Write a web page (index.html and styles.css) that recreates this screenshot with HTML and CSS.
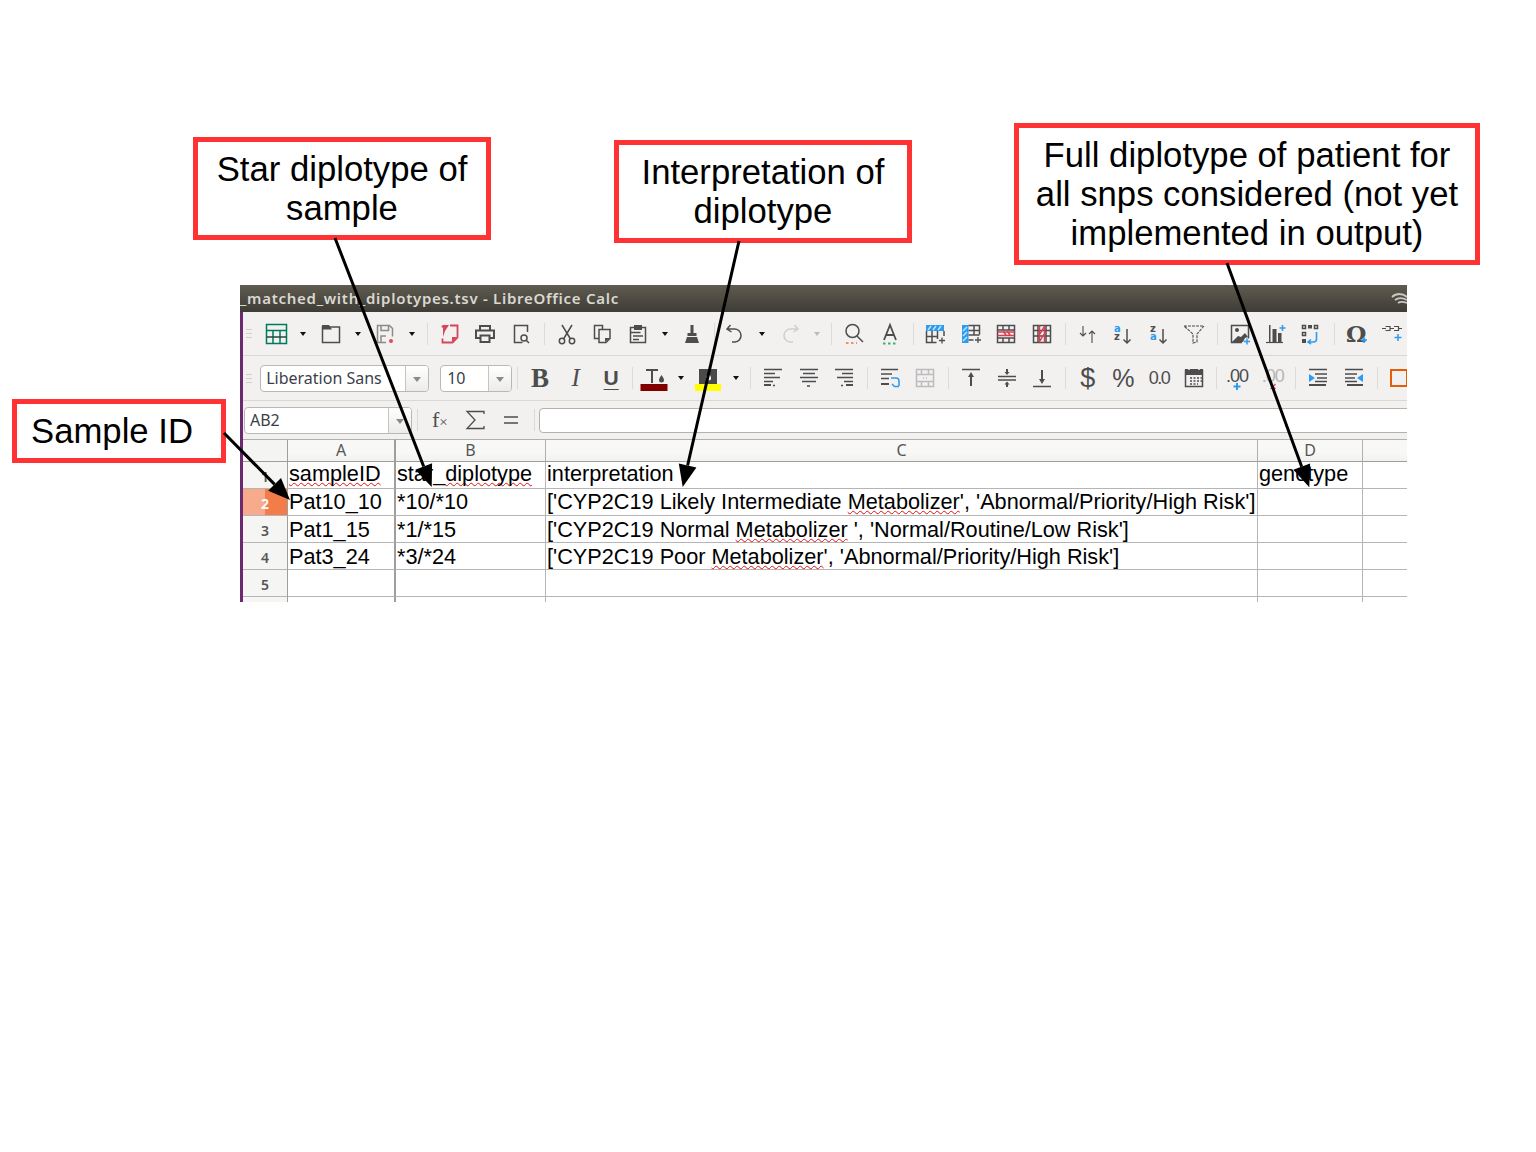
FILE: index.html

```html
<!DOCTYPE html>
<html lang="en">
<head>
  <meta charset="UTF-8" />
  <title>Matched diplotypes output</title>
  <link rel="stylesheet" href="styles.css">
</head>
<body>
<div class="canvas">

  <div class="callout star">Star diplotype of<br>sample</div>
  <div class="callout interp">Interpretation of<br>diplotype</div>
  <div class="callout full">Full diplotype of patient for<br>all snps considered (not yet<br>implemented in output)</div>
  <div class="callout sid">Sample ID</div>

  <div class="window">
    <div class="titlebar">
      <span>_matched_with_diplotypes.tsv - LibreOffice Calc</span>
      <svg class="wifi" width="16" height="14" viewBox="0 0 16 14"><path d="M1 6c4-4 11-4 15 0M4 9c3-2.5 8-2.5 12 0M7 12c2-1.5 5-1.5 9 0" fill="none" stroke="#c9c7c0" stroke-width="1.8"/></svg>
    </div>

    <div class="app">
      <!-- standard toolbar -->
      <div class="tb row1">
        <i class="grip"></i>
        <b class="ic"><svg viewBox="0 0 24 24"><rect x="2.5" y="2.5" width="20" height="19" stroke="#007a5c"/><path d="M2.5 8.5h20M9 8.5v13M16 8.5v13" stroke="#007a5c"/><path d="M2.5 15h20" stroke="#24493e"/></svg></b>
        <b class="dd"></b>
        <b class="ic"><svg viewBox="0 0 24 24"><rect x="3.5" y="5" width="17" height="15.5"/><path class="f" d="M3 3h7l3 4.500H3z"/></svg></b>
        <b class="dd"></b>
        <b class="ic"><svg viewBox="0 0 24 24"><path stroke="#8b8b8b" d="M13 20.500H4.500v-17h12l3 3v8M8 3.500v5h7.500v-5M8 20v-6h5"/><circle cx="18" cy="19" r="2" fill="#e5465e" stroke="none"/></svg></b>
        <b class="dd"></b>
        <i class="sep"></i>
        <b class="ic"><svg viewBox="0 0 24 24"><path stroke="#d6455a" stroke-width="1.8" d="M12 3.500h7.500v12l-5 5h-10v-4M4.500 3.500v2"/><path fill="#d6455a" stroke="none" d="M5 3h6l-4 6-2 6zM14 20v-5h5z"/></svg></b>
        <b class="ic"><svg viewBox="0 0 24 24"><path stroke-width="2" d="M7 8V4h10v4M7 16H3V8.500h18V16h-4"/><path stroke-width="2" d="M7.500 13.500h9V20h-9z"/></svg></b>
        <b class="ic"><svg viewBox="0 0 24 24"><path d="M18.500 10V3.500h-13v17h8"/><circle cx="15" cy="16" r="3"/><path d="M17 18l3 3"/></svg></b>
        <i class="sep"></i>
        <b class="ic"><svg viewBox="0 0 24 24"><circle cx="7" cy="19" r="2.7"/><circle cx="17" cy="19" r="2.7"/><path d="M8.500 17L17 3M15.500 17L7 3"/></svg></b>
        <b class="ic"><svg viewBox="0 0 24 24"><path d="M9 16.500H4.500v-13h8v4"/><path d="M9 7.500h11v9l-4 4H9z"/><path class="f" d="M15 20v-4h5z"/></svg></b>
        <b class="ic"><svg viewBox="0 0 24 24"><rect x="4.5" y="5.5" width="15" height="15"/><path class="f" d="M8 3h8v5H8z"/><path d="M4.500 10.500h10M7 14h10M7 17.500h6"/></svg></b>
        <b class="dd"></b>
        <b class="ic"><svg viewBox="0 0 24 24"><path class="f" d="M10.500 3h3v8h3v3h-9v-3h3zM7 15h10l2 6H5z"/></svg></b>
        <i class="sep n"></i>
        <b class="ic"><svg viewBox="0 0 24 24"><path d="M7.500 3L4 7l4.500 3M4 7h7a6.500 6.500 0 0 1 1 13H9"/></svg></b>
        <b class="dd"></b>
        <b class="ic"><svg viewBox="0 0 24 24"><path stroke="#cfcfcf" d="M16.500 3L20 7l-4.500 3M20 7h-7a6.500 6.500 0 0 0-1 13h3"/></svg></b>
        <b class="dd off"></b>
        <i class="sep"></i>
        <b class="ic"><svg viewBox="0 0 24 24"><circle cx="10.5" cy="9" r="6.5"/><path d="M15 14l6 6"/><path stroke="#f58a6c" stroke-width="2" stroke-dasharray="2.5 2.5" d="M4 21h11"/></svg></b>
        <b class="ic"><svg viewBox="0 0 24 24"><path stroke-width="1.8" d="M6 18l6-15 6 15M8 13h8"/><path stroke="#3cb371" stroke-width="2" stroke-dasharray="2.5 2.5" d="M5 21.500h14"/></svg></b>
        <i class="sep"></i>
        <b class="ic"><svg viewBox="0 0 24 24"><rect x="3" y="3" width="18" height="6" fill="#2d9cf0" stroke="none"/><path stroke="#bfe2fb" d="M5 8l3-4M10 8l3-4M15 8l3-4"/><path d="M3.500 9v11.500h10M21 9v5M3.500 14.500h11M9 9v11M14.500 9v8"/><path stroke-width="1.3" d="M19 15.500v6M16 18.500h6"/></svg></b>
        <b class="ic"><svg viewBox="0 0 24 24"><rect x="3" y="3" width="6.5" height="18" fill="#2d9cf0" stroke="none"/><path stroke="#bfe2fb" d="M4 9l4-4M4 14l4-4M4 19l4-4"/><path d="M9.500 3.500h11v9M9.500 8.500h11M9.500 13h11M9.500 18h5M15 3.500V13"/><path stroke-width="1.3" d="M19 15v6M16 18h6"/></svg></b>
        <b class="ic"><svg viewBox="0 0 24 24"><rect x="3.5" y="3.5" width="17" height="17"/><path d="M3.500 8h17M3.500 16h17M9 3.500v4.500M15 3.500v4.500M9 16v4.500M15 16v4.500"/><path stroke="#dc3d50" d="M3.500 13.500h17M3.500 10h17M9 9l3 4M13 9l3 4"/></svg></b>
        <b class="ic"><svg viewBox="0 0 24 24"><rect x="3.5" y="3.5" width="17" height="17"/><path d="M3.500 8.500h17M3.500 14h17M8 3.500v17M16 3.500v17"/><path stroke="#dc3d50" d="M9.500 3.500v17M14.500 3.500v17M14 5L10 12M14 12l-4 7"/></svg></b>
        <i class="sep"></i>
        <b class="ic"><svg viewBox="0 0 24 24"><path stroke-width="1.1" d="M7 4v10M4 11l3 3 3-3M16 21V9M13 12l3-3 3 3"/></svg></b>
        <b class="ic"><svg viewBox="0 0 24 24"><text x="3" y="10" class="az blue">a</text><text x="3" y="18" class="az">z</text><path d="M16 7v14M12.500 17.500l3.500 3.500 3.500-3.500"/></svg></b>
        <b class="ic"><svg viewBox="0 0 24 24"><text x="3" y="10" class="az">z</text><text x="3" y="18" class="az blue">a</text><path d="M16 7v14M12.500 17.500l3.500 3.500 3.500-3.500"/></svg></b>
        <b class="ic"><svg viewBox="0 0 24 24"><path stroke-width="1.1" stroke-dasharray="3 1" d="M2 4h20l-7 8v8l-4 1v-9z"/></svg></b>
        <i class="sep"></i>
        <b class="ic"><svg viewBox="0 0 24 24"><path d="M14 20.500H3.500v-17h17v13"/><circle class="f" cx="9" cy="8" r="2"/><path class="f" d="M4 20l6-6 3 1 4-4 3 4-3 1-2 4z"/><path stroke="#2d9cf0" stroke-width="1.5" d="M19 16.500v6M16 19.500h6"/></svg></b>
        <b class="ic"><svg viewBox="0 0 24 24"><path stroke-width="1.2" d="M2 20.500h17"/><path class="f" d="M5 3h1.500v17H5zM8.500 7h4v13h-4zM14 11h3.500v9H14z"/><path stroke="#2d9cf0" stroke-width="1.5" d="M18.500 3v6M15.500 6h6"/></svg></b>
        <b class="ic"><svg viewBox="0 0 24 24"><path d="M3.500 3.500h3v3h-3zM15.500 3.500h3v3h-3zM3.500 10.500h3v3h-3z"/><path class="f" d="M9 3h4v3.500H9zM3 17h4v4H3z"/><path stroke="#2d9cf0" stroke-width="1.6" d="M17.500 10v7a3 3 0 0 1-3 3H9M12 17.500L9 20l3 2"/></svg></b>
        <i class="sep"></i>
        <b class="ic"><svg viewBox="0 0 24 24"><text x="1" y="20" class="omega">Ω</text><path stroke="#2d9cf0" stroke-width="1.5" d="M19 15v6M16 18h6"/></svg></b>
        <b class="ic"><svg viewBox="0 0 24 24"><path stroke-width="1.2" d="M2 6.500h4M5.500 4.500H10v4H5.500M14 4.500h4.500v4H14M10 6.500h4M18 6.500h4"/><path stroke="#2d9cf0" stroke-width="1.5" d="M18 12v7M14.500 15.500h7"/></svg></b>
      </div>

      <!-- formatting toolbar -->
      <div class="tb row2">
        <i class="grip"></i>
        <div class="combo font"><span>Liberation Sans</span><em></em></div>
        <div class="combo size"><span>10</span><em></em></div>
        <i class="sep"></i>
        <b class="ic"><span class="glyph bold">B</span></b>
        <b class="ic"><span class="glyph ital">I</span></b>
        <b class="ic"><span class="glyph under">U</span></b>
        <i class="sep n"></i>
        <b class="ic"><svg viewBox="0 0 24 24"><path stroke-width="2" d="M4 4h12M10 4v13"/><path class="f" d="M19.500 9c-1 2-2.500 3-2.500 5a2.500 2.500 0 0 0 5 0c0-2-1.500-3-2.500-5z"/><rect x="-1.5" y="18" width="27" height="7" fill="#800000" stroke="none"/></svg></b>
        <b class="dd"></b>
        <b class="ic"><svg viewBox="0 0 24 24"><rect x="3" y="3" width="18" height="15" fill="#4a4a4a" stroke="none"/><path fill="#fff" stroke="none" d="M12.500 7c-1 2-2.500 3-2.500 5a2.500 2.500 0 0 0 5 0c0-2-1.500-3-2.500-5z"/><rect x="-1" y="18" width="26" height="7" fill="#ffff00" stroke="none"/></svg></b>
        <b class="dd"></b>
        <i class="sep"></i>
        <b class="ic"><svg viewBox="0 0 24 24"><path d="M3 3.500h18M3 7.500h11M3 11.500h16M3 15.500h9"/><path stroke-width="2" d="M3 19h7"/><path d="M12 19.500h2"/></svg></b>
        <b class="ic"><svg viewBox="0 0 24 24"><path d="M3 3.500h18M6 7.500h12M3 11.500h18M5 15.500h14"/><path d="M10 20h3"/></svg></b>
        <b class="ic"><svg viewBox="0 0 24 24"><path d="M3 3.500h18M10 7.500h11M5 11.500h16M12 15.500h9"/><path stroke-width="2" d="M14 19h7"/><path d="M9 19.500h2"/></svg></b>
        <i class="sep"></i>
        <b class="ic"><svg viewBox="0 0 24 24"><path d="M3 3.500h17M3 8h11M3 12.500h8"/><path stroke-width="2" d="M3 18h8"/><path stroke="#2d9cf0" stroke-width="1.6" d="M13 12h5a3 3 0 0 1 3 3v5M14 18l2.500 2.500H21"/></svg></b>
        <b class="ic"><svg viewBox="0 0 24 24"><path stroke="#bcbcbc" d="M3.500 3.500h17v17h-17zM3.500 8.500h17M3.500 15.500h17M8.500 3.500v5M15.500 3.500v5M8.500 15.500v5M15.500 15.500v5M10 12h1M13 12h1"/></svg></b>
        <i class="sep"></i>
        <b class="ic"><svg viewBox="0 0 24 24"><path d="M3 3.500h18"/><path stroke-width="2" d="M12 9v11"/><path class="f" d="M12 6l3 5H9z"/></svg></b>
        <b class="ic"><svg viewBox="0 0 24 24"><path d="M3 10.500h18M3 14h18"/><path class="f" d="M12 9L9.500 6h1.500V3h2v3h1.500zM12 15.500l2.500 3H13V21h-2v-2.500H9.500z"/></svg></b>
        <b class="ic"><svg viewBox="0 0 24 24"><path d="M3 20.500h18"/><path stroke-width="2" d="M12 4v11"/><path class="f" d="M12 18l3-5H9z"/></svg></b>
        <i class="sep"></i>
        <b class="ic"><span class="glyph money">$</span></b>
        <b class="ic"><span class="glyph pct">%</span></b>
        <b class="ic"><span class="glyph num">0.0</span></b>
        <b class="ic"><svg viewBox="0 0 24 24"><rect x="3.5" y="4.5" width="17" height="16"/><path class="f" d="M3 3h3v2h2V3h8v2h2V3h3v6H3z"/><path stroke-width="1.6" stroke-dasharray="2 1.5" d="M8 12h12M8 15h12M8 18h8"/></svg></b>
        <i class="sep n"></i>
        <b class="ic"><span class="glyph dec">.00</span><svg class="plus" viewBox="0 0 24 24"><path stroke="#2d9cf0" stroke-width="2" d="M12 17v7M8.500 20.500h7"/></svg></b>
        <b class="ic"><span class="glyph dec off">.00</span><svg class="plus" viewBox="0 0 24 24"><path stroke="#e2506a" stroke-width="1.5" d="M9.500 18l5 5M14.500 18l-5 5"/></svg></b>
        <i class="sep"></i>
        <b class="ic"><svg viewBox="0 0 24 24"><path d="M3 3.500h18M9 8h12M11 12h10M9 15.500h12"/><path stroke-width="2" d="M3 19h17"/><path fill="#2d9cf0" stroke="none" d="M3 8l6 4-6 4z"/></svg></b>
        <b class="ic"><svg viewBox="0 0 24 24"><path d="M3 3.500h18M3 8h12M3 12h10M3 15.500h12"/><path stroke-width="2" d="M5 19h16"/><path fill="#2d9cf0" stroke="none" d="M21 8l-6 4 6 4z"/></svg></b>
        <i class="sep"></i>
        <b class="ic"><svg viewBox="0 0 24 24"><rect x="4" y="4" width="16" height="16" stroke="#e35d0a" stroke-width="2"/></svg></b>
      </div>

      <!-- name box and input line -->
      <div class="tb row3">
        <div class="combo namebox"><span>AB2</span><em></em></div>
        <i class="sep"></i>
        <b class="ic"><span class="glyph fx">f<small>×</small></span></b>
        <b class="ic"><svg viewBox="0 0 24 24"><path stroke-width="1.3" d="M21 6V3.500H4L12 12l-8 8.500h17V18"/></svg></b>
        <b class="ic"><svg viewBox="0 0 24 24"><path stroke-width="1.3" d="M5 9h14M5 15h14"/></svg></b>
        <i class="sep"></i>
        <div class="inputline"></div>
      </div>

      <!-- sheet -->
      <div class="sheet">
        <div class="corner"></div>
        <div class="colhead wide">A</div>
        <div class="colhead">B</div>
        <div class="colhead">C</div>
        <div class="colhead">D</div>
        <div class="colhead last"></div>

        <div class="rowhead">1</div>
        <div class="cell top wide"><span class="wavy">sampleID</span></div>
        <div class="cell top">star_<span class="wavy">diplotype</span></div>
        <div class="cell top">interpretation</div>
        <div class="cell top">genotype</div>
        <div class="cell last"></div>

        <div class="rowhead active">2</div>
        <div class="cell wide">Pat10_10</div>
        <div class="cell">*10/*10</div>
        <div class="cell">['CYP2C19 Likely Intermediate <span class="wavy">Metabolizer</span>', 'Abnormal/Priority/High Risk']</div>
        <div class="cell"></div>
        <div class="cell last"></div>

        <div class="rowhead">3</div>
        <div class="cell low wide">Pat1_15</div>
        <div class="cell low">*1/*15</div>
        <div class="cell low">['CYP2C19 Normal <span class="wavy">Metabolizer</span> ', 'Normal/Routine/Low Risk']</div>
        <div class="cell"></div>
        <div class="cell last"></div>

        <div class="rowhead">4</div>
        <div class="cell low wide">Pat3_24</div>
        <div class="cell low">*3/*24</div>
        <div class="cell low">['CYP2C19 Poor <span class="wavy">Metabolizer</span>', 'Abnormal/Priority/High Risk']</div>
        <div class="cell"></div>
        <div class="cell last"></div>

        <div class="rowhead">5</div>
        <div class="cell wide"></div>
        <div class="cell"></div>
        <div class="cell"></div>
        <div class="cell"></div>
        <div class="cell last"></div>

        <div class="rowhead"></div>
        <div class="cell wide"></div>
        <div class="cell"></div>
        <div class="cell"></div>
        <div class="cell"></div>
        <div class="cell last"></div>
      </div>
    </div>
  </div>

  <svg class="arrows" width="1536" height="1152" viewBox="0 0 1536 1152">
    <path d="M335 238L423.7 466.5M739 241L687.6 465.5M1227 263L1301.7 466.7M224 433L274.6 484.4"/>
    <polygon points="431.7,487 432.1,463.2 415.3,469.8"/>
    <polygon points="682.7,487 696.4,467.5 678.8,463.5"/>
    <polygon points="1309.3,487.3 1310.1,463.6 1293.3,469.8"/>
    <polygon points="290,500 281,478.1 268.2,490.7"/>
  </svg>

</div>
</body>
</html>
```

FILE: styles.css

```css
* {
  box-sizing: border-box;
}

body {
  margin: 0;
  background: #fff;
  font-family: 'Liberation Sans', Arial, sans-serif;
}

.canvas {
  position: relative;
  width: 1536px;
  height: 1152px;
  overflow: hidden;
}

/* callouts */
.callout {
  position: absolute;
  display: flex;
  align-items: center;
  justify-content: center;
  text-align: center;
  background: #fff;
  border: 5px solid #ff3333;
  font-size: 34.7px;
  line-height: 39px;
  color: #000;
}

.star { left: 193px; top: 137px; width: 298px; height: 103px; }
.interp { left: 614px; top: 140px; width: 298px; height: 103px; }
.full { left: 1014px; top: 123px; width: 466px; height: 142px; }
.sid { left: 12px; top: 399px; width: 214px; height: 64px; padding-right: 14px; }

.arrows {
  position: absolute;
  left: 0;
  top: 0;
  pointer-events: none;
}

.arrows path {
  fill: none;
  stroke: #000;
  stroke-width: 3;
}

.arrows polygon {
  fill: #000;
}

/* window */
.window {
  position: absolute;
  left: 240px;
  top: 285px;
  width: 1167px;
  height: 317px;
  overflow: hidden;
  background: #f2f1f0;
}

.titlebar {
  display: flex;
  align-items: center;
  justify-content: space-between;
  height: 27px;
  padding-bottom: 2px;
  background: linear-gradient(#5f5b50, #3e3c36);
  color: #dad8d1;
  font-family: 'Noto Sans', sans-serif;
  font-size: 15px;
  font-weight: 600;
  letter-spacing: 0.72px;
  white-space: nowrap;
}

.wifi {
  margin-top: 1px;
}

.app {
  border-left: 3px solid #6b2a70;
  height: 290px;
}

/* toolbars */
.tb {
  display: flex;
  align-items: center;
  border-bottom: 1px solid #d9d8d5;
}

.row1 { height: 44px; }
.row2 { height: 45px; }
.row3 { height: 38px; border-bottom: 0; }

.grip {
  flex: none;
  width: 6px;
  height: 9px;
  margin: 0 6.2px 0 3px;
  background: repeating-linear-gradient(#cfcfcc 0 1px, transparent 1px 4px);
}

.ic {
  position: relative;
  display: flex;
  align-items: center;
  justify-content: center;
  flex: none;
  width: 35.6px;
  height: 24px;
  font-weight: normal;
}

.ic svg {
  width: 24px;
  height: 24px;
  overflow: visible;
  fill: none;
  stroke: #4d4d4d;
  stroke-width: 1.5;
}

.ic svg .f {
  fill: #4d4d4d;
  stroke: none;
}

.ic svg.plus {
  position: absolute;
  left: 5.8px;
  top: 0;
}

.az {
  font-family: 'DejaVu Sans', sans-serif;
  font-size: 10px;
  font-weight: bold;
  fill: #4d4d4d;
  stroke: none;
}

.az.blue {
  fill: #2d9cf0;
}

.omega {
  font-family: 'DejaVu Serif', serif;
  font-size: 23px;
  font-weight: bold;
  fill: #4d4d4d;
  stroke: none;
}

.dd {
  display: flex;
  align-items: center;
  justify-content: center;
  flex: none;
  width: 19px;
}

.dd::after {
  content: "";
  border: 3.5px solid transparent;
  border-top: 4px solid #111;
  border-bottom: 0;
}

.dd.off::after {
  border-top-color: #bbb;
}

.sep {
  flex: none;
  position: relative;
  width: 10px;
  height: 22px;
}

.sep::after {
  content: "";
  position: absolute;
  left: 50%;
  top: 0;
  bottom: 0;
  width: 1px;
  background: #dcdbd8;
}

.sep.n {
  width: 7px;
}

.combo {
  display: flex;
  flex: none;
  height: 27px;
  background: #fff;
  border: 1px solid #b9b8b5;
  border-radius: 4px;
  font-family: 'Noto Sans', sans-serif;
  font-size: 16px;
  color: #3c3f4a;
  overflow: hidden;
}

.combo span {
  flex: 1;
  padding-left: 5px;
  line-height: 25px;
  white-space: nowrap;
}

.combo em {
  position: relative;
  flex: none;
  width: 23px;
  border-left: 1px solid #c6c5c2;
  background: linear-gradient(#fff, #ecebe9);
}

.combo em::after {
  content: "";
  position: absolute;
  left: 7px;
  top: 11px;
  border: 4px solid transparent;
  border-top: 5px solid #8a8a8a;
  border-bottom: 0;
}

.font { width: 169px; margin-left: 2px; }
.size { width: 72px; margin-left: 11px; }
.size span { padding-left: 6px; }
.namebox { width: 168px; margin-left: 1px; }

.glyph {
  color: #4d4d4d;
  line-height: 24px;
}

.bold { font: bold 27px 'Liberation Serif', serif; }
.ital { font: italic 25px 'Liberation Serif', serif; }
.under {
  font: bold 21px 'Liberation Sans', sans-serif;
  text-decoration: underline 1px;
  text-underline-offset: 4px;
}
.money { font: 27px 'Liberation Sans', sans-serif; }
.pct { font: 25px 'Liberation Sans', sans-serif; }
.num { font: 18px 'Liberation Sans', sans-serif; letter-spacing: -1.5px; }
.dec { font: 18px 'Liberation Sans', sans-serif; margin-top: -4px; letter-spacing: -1px; }
.dec.off { color: #b5b5b5; }
.fx { font: 22px 'Liberation Serif', serif; }
.fx small { font-size: 15px; }

.inputline {
  flex: 1;
  height: 25px;
  margin-right: -12px;
  background: #fff;
  border: 1px solid #b3b2af;
  border-radius: 4px;
}

/* sheet */
.sheet {
  display: grid;
  grid-template-columns: 45px 108px 150px 712px 105px 1fr;
  grid-template-rows: 23px;
  grid-auto-rows: 27px;
  background: #fff;
}

.colhead {
  text-align: center;
  background: linear-gradient(#f8f8f7 60%, #f1f1ef);
  border-top: 1px solid #b0b0ae;
  border-bottom: 1px solid #9e9e9c;
  border-right: 1px solid #b0b0ae;
  font: 16px/20px 'Noto Sans', sans-serif;
  color: #555;
}

.corner {
  background: #f4f4f2;
  border-top: 1px solid #b0b0ae;
  border-bottom: 1px solid #9e9e9c;
  border-right: 1px solid #9e9e9c;
}

.rowhead {
  background: #f5f5f4;
  border-bottom: 1px solid #b5b5b5;
  border-right: 1px solid #9e9e9c;
  text-align: center;
  font: 600 14px/29px 'Noto Sans', sans-serif;
  color: #555;
}

.rowhead.active {
  background: linear-gradient(90deg, #f7ab8c 50%, #f27c4a 50%);
  color: #fff;
  font-weight: bold;
}

.cell {
  padding-left: 1px;
  border-bottom: 1px solid #b5b5b5;
  border-right: 1px solid #b5b5b5;
  font-size: 21.7px;
  line-height: 26px;
  color: #000;
  white-space: nowrap;
}

.cell.top { line-height: 24px; }
.cell.low { line-height: 28px; }

.cell.wide,
.colhead.wide {
  border-right: 2px solid #9e9e9c;
}

.cell.last,
.colhead.last {
  border-right: 0;
}

.wavy {
  text-decoration: underline wavy #e01010 1.4px;
  text-decoration-skip-ink: none;
  text-underline-offset: 1px;
}
```
